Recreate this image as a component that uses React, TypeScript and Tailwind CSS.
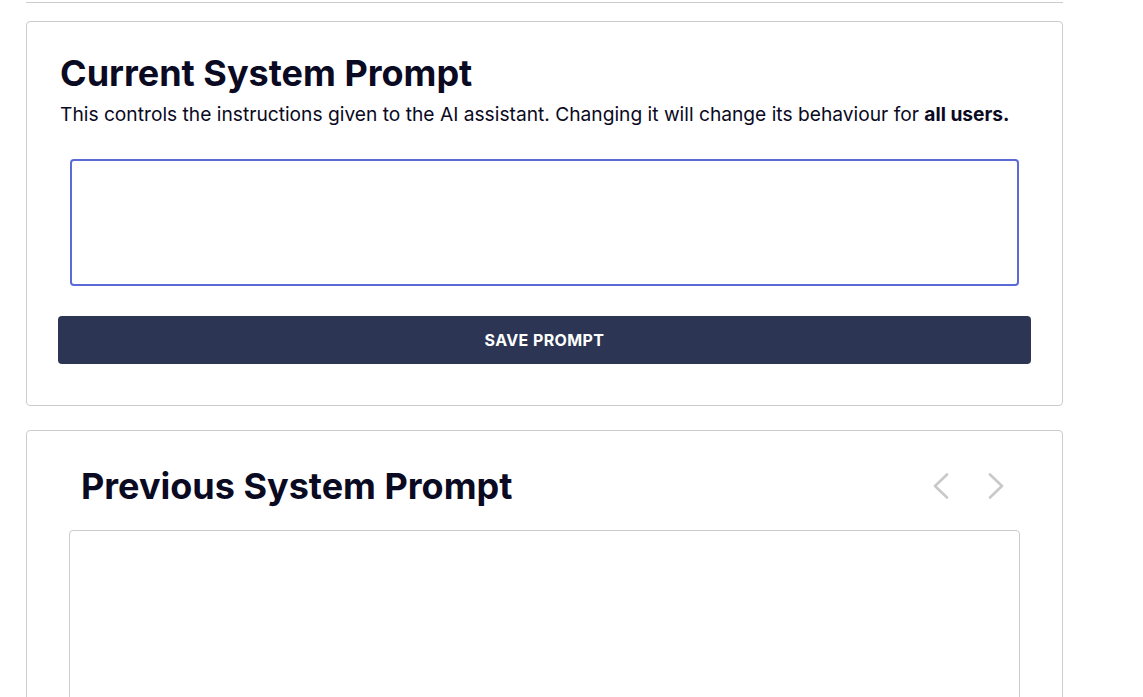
import React from 'react';

const Chevron: React.FC<{ dir: 'left' | 'right' }> = ({ dir }) => (
  <svg width="16" height="26" viewBox="0 0 16 26" fill="none" aria-hidden="true">
    <polyline
      points={dir === 'left' ? '14,1.5 2,13 14,24.5' : '2,1.5 14,13 2,24.5'}
      stroke="#c9c9c9"
      strokeWidth="2.6"
      strokeLinecap="round"
      strokeLinejoin="round"
    />
  </svg>
);

export default function App() {
  return (
    <div
      className="h-[697px] w-full overflow-hidden bg-white text-[#0a0a23]"
      style={{ fontFamily: 'Inter, "Noto Sans", sans-serif' }}
    >
      <div className="ml-[26px] w-[1037px]">
        <div className="h-[3px] border-b border-[#cccccc]"></div>

        {/* current prompt */}
        <section className="mt-[18px] rounded-[4px] border border-[#cccccc] px-[31px] pt-[31px] pb-[41px]">
          <div className="pl-[2px]">
            <h1 className="text-[36px] font-bold leading-[40px]">Current System Prompt</h1>
            <p className="mt-[7px] text-[19.2px] leading-[28px]">
              This controls the instructions given to the AI assistant. Changing it will change its
              behaviour for <span className="font-bold">all users.</span>
            </p>
          </div>
          <textarea className="mx-3 mt-[31px] block h-[127px] w-[calc(100%-24px)] resize-none rounded-[4px] border-2 border-[#5a6bd8] outline-none"></textarea>
          <button className="mt-[30px] flex h-[48px] w-full items-center justify-center rounded-[4px] bg-[#2c3654] text-[16px] font-bold uppercase tracking-[0.4px] text-white">
            Save Prompt
          </button>
        </section>

        {/* previous prompt */}
        <section className="mt-[24px] rounded-[4px] border border-[#cccccc] pt-[35px] pb-[40px]">
          <div className="ml-[54px] mr-[58px] flex items-center justify-between">
            <h2 className="text-[36px] font-bold leading-[40px]">Previous System Prompt</h2>
            <div className="flex items-center gap-[39px]">
              <Chevron dir="left" />
              <Chevron dir="right" />
            </div>
          </div>
          <div className="mx-[42px] mt-[24px] h-[300px] rounded-[4px] border border-[#cccccc]"></div>
        </section>
      </div>
    </div>
  );
}
